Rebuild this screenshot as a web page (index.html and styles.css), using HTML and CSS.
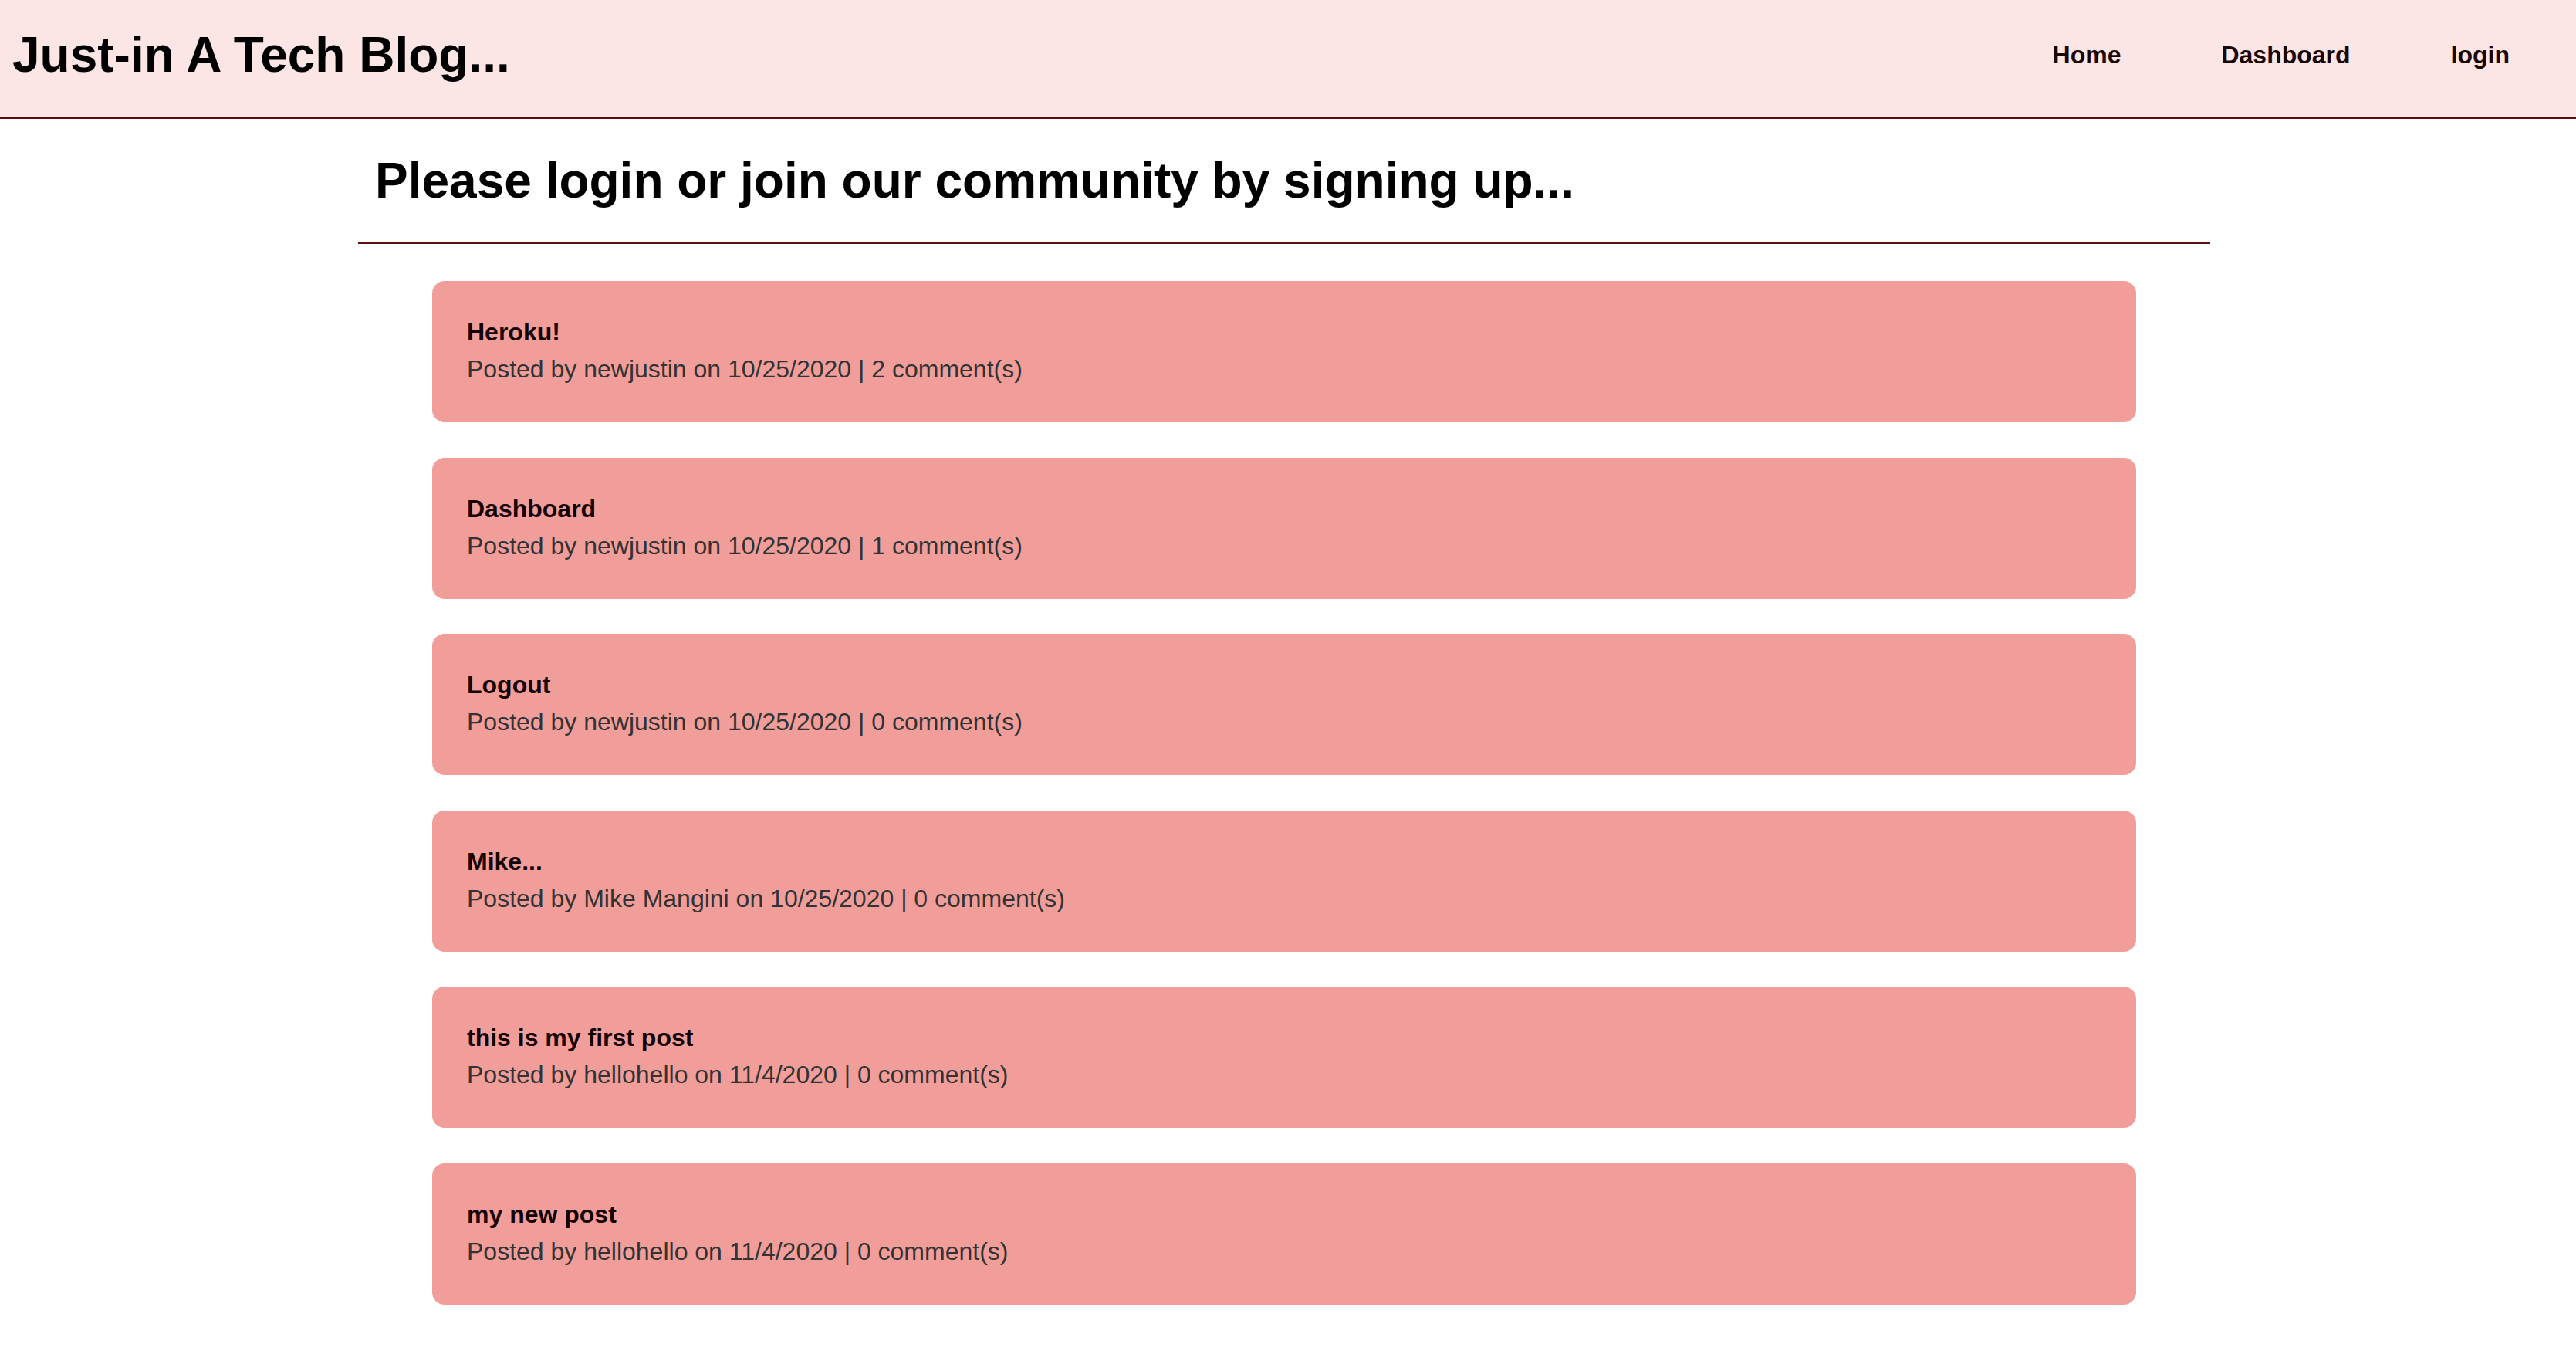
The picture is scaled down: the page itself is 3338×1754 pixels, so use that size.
FILE: index.html
```html
<!DOCTYPE html>
<html lang="en">
<head>
<meta charset="utf-8">
<title>Just-in A Tech Blog...</title>
<link rel="stylesheet" href="styles.css">
</head>
<body>
<header class="site-header">
  <h1 class="brand">Just-in A Tech Blog...</h1>
  <nav class="nav">
    <a class="nav-link" href="#">Home</a>
    <a class="nav-link" href="#">Dashboard</a>
    <a class="nav-link" href="#">login</a>
  </nav>
</header>
<div class="page">
  <main class="main">
    <h2 class="intro">Please login or join our community by signing up...</h2>
    <section class="posts">
      <article class="post">
        <h3 class="post-title">Heroku!</h3>
        <p class="post-meta">Posted by newjustin on 10/25/2020 | 2 comment(s)</p>
      </article>
      <article class="post">
        <h3 class="post-title">Dashboard</h3>
        <p class="post-meta">Posted by newjustin on 10/25/2020 | 1 comment(s)</p>
      </article>
      <article class="post">
        <h3 class="post-title">Logout</h3>
        <p class="post-meta">Posted by newjustin on 10/25/2020 | 0 comment(s)</p>
      </article>
      <article class="post">
        <h3 class="post-title">Mike...</h3>
        <p class="post-meta">Posted by Mike Mangini on 10/25/2020 | 0 comment(s)</p>
      </article>
      <article class="post">
        <h3 class="post-title">this is my first post</h3>
        <p class="post-meta">Posted by hellohello on 11/4/2020 | 0 comment(s)</p>
      </article>
      <article class="post">
        <h3 class="post-title">my new post</h3>
        <p class="post-meta">Posted by hellohello on 11/4/2020 | 0 comment(s)</p>
      </article>
    </section>
  </main>
</div>
</body>
</html>
```

FILE: styles.css
```css
* {
  box-sizing: border-box;
}

html, body {
  margin: 0;
  padding: 0;
  background: #ffffff;
  font-family: "Liberation Sans", Arial, Helvetica, sans-serif;
  color: #000;
}

.site-header {
  display: flex;
  justify-content: space-between;
  align-items: flex-start;
  height: 154px;
  background: #fbe5e5;
  border-bottom: 2px solid #5a1010;
  padding: 34px 86px 0 16px;
}

.brand {
  margin: 0;
  font-size: 64px;
  font-weight: 700;
  line-height: normal;
}

.nav {
  display: flex;
  gap: 130px;
  padding-top: 19px;
}

.nav-link {
  font-size: 32px;
  font-weight: 700;
  color: #1a0505;
  text-decoration: none;
  line-height: normal;
}

.page {
  padding-right: 10px;
}

.main {
  width: 2400px;
  margin: 0 auto;
}

.intro {
  margin: 43px 0 0 0;
  padding: 0 0 43px 22px;
  font-size: 64px;
  font-weight: 700;
  line-height: normal;
  border-bottom: 2px solid #5a1010;
}

.posts {
  display: flex;
  flex-direction: column;
  align-items: center;
  gap: 45.6px;
  padding: 48px 0 60px;
}

.post {
  width: 2208px;
  height: 183px;
  background: #f19e9b;
  border-radius: 16px;
  padding: 48px 45px 0;
}

.post-title {
  margin: 0 0 11px;
  font-size: 32px;
  font-weight: 700;
  line-height: normal;
  color: #140000;
}

.post-meta {
  margin: 0;
  font-size: 32px;
  font-weight: 400;
  line-height: normal;
  color: #333;
}
```
